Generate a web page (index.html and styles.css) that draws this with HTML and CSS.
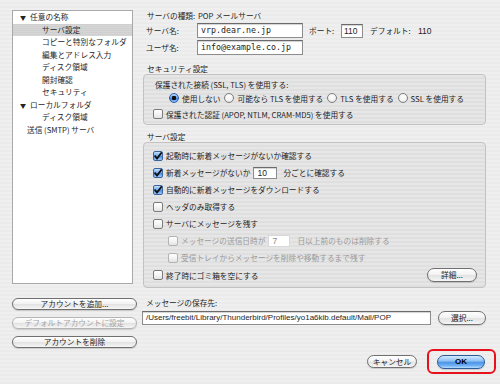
FILE: index.html
```html
<!DOCTYPE html>
<html lang="ja">
<head>
<meta charset="utf-8">
<link rel="stylesheet" href="styles.css">
</head>
<body>
<div class="window">
  <div class="left">
    <ul class="tree">
      <li class="row top"><span class="tri">▼</span>任意の名称</li>
      <li class="row sub sel">サーバ設定</li>
      <li class="row sub">コピーと特別なフォルダ</li>
      <li class="row sub">編集とアドレス入力</li>
      <li class="row sub">ディスク領域</li>
      <li class="row sub">開封確認</li>
      <li class="row sub">セキュリティ</li>
      <li class="row top"><span class="tri">▼</span>ローカルフォルダ</li>
      <li class="row sub">ディスク領域</li>
      <li class="row plain">送信 (SMTP) サーバ</li>
    </ul>
    <div class="acct-btns">
      <button class="pill wide">アカウントを追加...</button>
      <button class="pill wide disabled">デフォルトアカウントに設定</button>
      <button class="pill wide">アカウントを削除</button>
    </div>
  </div>

  <div class="right">
    <div class="line info"><span class="lbl">サーバの種類:</span><span>POP メールサーバ</span></div>
    <div class="line field">
      <span class="lbl">サーバ名:</span>
      <span class="input mono name">vrp.dear.ne.jp</span>
      <span class="port-lbl">ポート:</span>
      <span class="input port">110</span>
      <span class="def">デフォルト:</span><span class="def-val">110</span>
    </div>
    <div class="line field">
      <span class="lbl">ユーザ名:</span>
      <span class="input mono name">info@example.co.jp</span>
    </div>

    <div class="caption sec-cap">セキュリティ設定</div>
    <div class="group g1">
      <div class="g1-title">保護された接続 (SSL, TLS) を使用する:</div>
      <div class="radios">
        <span class="opt"><span class="radio on"></span>使用しない</span>
        <span class="opt"><span class="radio"></span>可能なら TLS を使用する</span>
        <span class="opt"><span class="radio"></span>TLS を使用する</span>
        <span class="opt"><span class="radio"></span>SSL を使用する</span>
      </div>
      <div class="opt"><span class="cb"></span>保護された認証 (APOP, NTLM, CRAM-MD5) を使用する</div>
    </div>

    <div class="caption srv-cap">サーバ設定</div>
    <div class="group g2">
      <div class="crow"><span class="cb on"></span>起動時に新着メッセージがないか確認する</div>
      <div class="crow"><span class="cb on"></span>新着メッセージがないか<span class="input mini ten">10</span>分ごとに確認する</div>
      <div class="crow"><span class="cb on"></span>自動的に新着メッセージをダウンロードする</div>
      <div class="crow"><span class="cb"></span>ヘッダのみ取得する</div>
      <div class="crow"><span class="cb"></span>サーバにメッセージを残す</div>
      <div class="crow indent dis"><span class="cb"></span>メッセージの送信日時が<span class="input mini seven">7</span>日以上前のものは削除する</div>
      <div class="crow indent dis"><span class="cb"></span>受信トレイからメッセージを削除や移動するまで残す</div>
      <div class="crow last"><span class="cbl"><span class="cb"></span>終了時にゴミ箱を空にする</span><button class="pill detail">詳細...</button></div>
    </div>

    <div class="caption store-cap">メッセージの保存先:</div>
    <div class="path-row">
      <span class="input path">/Users/freebit/Library/Thunderbird/Profiles/yo1a6kib.default/Mail/POP</span>
      <button class="pill choose">選択...</button>
    </div>

    <div class="footer">
      <button class="pill cancel">キャンセル</button>
      <span class="ok-frame"><button class="pill ok">OK</button></span>
    </div>
  </div>
</div>
</body>
</html>
```

FILE: styles.css
```css
* { box-sizing: border-box; }
html, body { margin: 0; padding: 0; }
body {
  width: 500px;
  height: 384px;
  overflow: hidden;
  font-family: "Noto Sans CJK JP", "Liberation Sans", sans-serif;
  font-size: 7.7px;
  color: #1e1e1e;
  background: repeating-linear-gradient(to bottom, #efefef 0 2px, #ebebeb 2px 4px);
}
.window {
  display: flex;
  padding: 10px 0 0 12px;
  height: 384px;
}
.left {
  width: 125px;
  display: flex;
  flex-direction: column;
}
.tree {
  list-style: none;
  margin: 0;
  padding: 0;
  width: 121px;
  height: 274px;
  background: #fff;
  border: 1px solid #a9a9a9;
}
.row {
  height: 12.5px;
  line-height: 12.5px;
  white-space: nowrap;
}
.row.top { padding-left: 7px; }
.row.sub { padding-left: 29px; }
.row.plain { padding-left: 14px; }
.row.sel {
  background: repeating-linear-gradient(to bottom, #cfcfcf 0 1px, #d6d6d6 1px 2px);
}
.tri {
  display: inline-block;
  width: 9px;
  font-size: 6px;
  color: #222;
  margin-right: 1px;
}
.acct-btns {
  display: flex;
  flex-direction: column;
  gap: 7px;
  margin-top: 14px;
}
.pill {
  font-family: inherit;
  font-size: 7.7px;
  color: #222;
  height: 12px;
  padding: 0;
  line-height: 10px;
  white-space: nowrap;
  text-align: center;
  border: 1px solid #6f6f6f;
  border-radius: 7px;
  background: linear-gradient(to bottom, #ffffff 0%, #f3f3f3 45%, #e3e3e3 55%, #f6f6f6 100%);
  box-shadow: 0 1px 1px rgba(0,0,0,0.15);
  cursor: default;
}
.pill.wide { width: 125px; }
.pill.disabled { color: #a4a4a4; border-color: #b4b4b4; }

.right {
  width: 343px;
  margin-left: 6px;
  display: flex;
  flex-direction: column;
}
.line {
  display: flex;
  align-items: center;
  white-space: nowrap;
}
.info { height: 10px; padding-left: 4px; }
.lbl { width: 51px; flex: none; }
.field { margin-top: 3px; padding-left: 3px; }
.field + .field { margin-top: 2px; }
.input {
  display: inline-block;
  background: #fff;
  border: 1px solid #8d8d8d;
  border-top-color: #6a6a6a;
  box-shadow: inset 0 1px 1px rgba(0,0,0,0.18);
  white-space: nowrap;
  overflow: hidden;
}
.mono {
  font-family: "DejaVu Sans Mono", "Liberation Mono", monospace;
  font-size: 8.3px;
}
.name {
  width: 106px;
  height: 15px;
  line-height: 13px;
  padding-left: 3px;
}
.port-lbl { margin-left: 6px; width: 32px; }
.port {
  width: 22px;
  height: 14px;
  line-height: 12px;
  padding-left: 2px;
  font-family: "Liberation Sans", sans-serif;
  font-size: 8.5px;
}
.def { margin-left: 7px; width: 48px; }
.def-val { font-family: "Liberation Sans", sans-serif; font-size: 8.5px; }

.caption { height: 10px; line-height: 10px; padding-left: 4px; }
.sec-cap { margin-top: 9px; }
.srv-cap { margin-top: 7px; }
.store-cap { margin-top: 10px; padding-left: 3px; }

.group {
  border: 1px solid #c2c2c2;
  border-radius: 4px;
  background: repeating-linear-gradient(to bottom, #e6e6e6 0 2px, #dfdfdf 2px 4px);
}
.g1 {
  height: 51px;
  padding: 5px 0 0 9px;
}
.g1-title { height: 10px; line-height: 10px; padding-left: 2px; }
.radios {
  display: flex;
  gap: 4px;
  margin-top: 2px;
  padding-left: 16px;
  height: 12px;
  align-items: center;
}
.opt {
  display: flex;
  align-items: center;
  height: 12px;
  white-space: nowrap;
}
.g1 > .opt { margin-top: 4px; }
.radio {
  width: 10px;
  height: 10px;
  border-radius: 50%;
  border: 1px solid #7d7d7d;
  background: radial-gradient(circle at 50% 35%, #ffffff 0%, #f0f0f0 60%, #d8d8d8 100%);
  margin-right: 3px;
  flex: none;
}
.radio.on {
  border-color: #2f5ea8;
  background: radial-gradient(circle at 50% 50%, #111 0 2px, transparent 2.5px),
              linear-gradient(to bottom, #bcdcff 0%, #5c9de8 50%, #3f83db 55%, #8fc4ff 100%);
}
.cb {
  width: 10px;
  height: 10px;
  border: 1px solid #7b7b7b;
  border-radius: 2px;
  background: linear-gradient(to bottom, #ffffff 0%, #f4f4f4 50%, #e2e2e2 100%);
  margin-right: 3px;
  flex: none;
  display: inline-block;
}
.cb.on {
  border-color: #3c64a0;
  background:
    url("data:image/svg+xml;utf8,<svg xmlns='http://www.w3.org/2000/svg' width='10' height='10' viewBox='0 0 10 10'><path d='M1.6 4.6 L4 7.6 L9.6 0.2' fill='none' stroke='%23111' stroke-width='1.8'/></svg>") center/10px 10px no-repeat,
    linear-gradient(to bottom, #c4e0ff 0%, #6aa6ea 50%, #4a8ce0 55%, #9acbff 100%);
}
.g2 {
  height: 146px;
  padding: 4px 8px 0 9px;
}
.crow {
  height: 17px;
  display: flex;
  align-items: center;
  white-space: nowrap;
}
.crow.indent { padding-left: 15px; }
.crow.dis { color: #9a9a9a; }
.crow.dis .cb { border-color: #b3b3b3; }
.mini {
  height: 12px;
  line-height: 10px;
  font-family: "Liberation Sans", sans-serif;
  font-size: 8.5px;
  padding-left: 3px;
}
.ten { width: 24px; margin: 0 6px 0 3px; }
.seven { width: 22px; margin: 0 7px 0 3px; border-color: #d8d8d8; box-shadow: none; color: #888; }
.crow.last { justify-content: space-between; height: 18px; }
.cbl { display: flex; align-items: center; }
.detail { width: 50px; height: 14px; }

.path-row {
  display: flex;
  align-items: center;
  margin-top: 3px;
  gap: 7px;
  margin-left: -1px;
}
.path {
  width: 289px;
  height: 14px;
  line-height: 12px;
  padding-left: 3px;
  font-family: "Liberation Sans", sans-serif;
  font-size: 8px;
}
.choose { width: 48px; height: 14px; }

.footer {
  display: flex;
  justify-content: flex-end;
  align-items: center;
  gap: 10px;
  margin-top: 24px;
  margin-right: -10px;
}
.cancel { width: 50px; height: 13px; }
.ok-frame {
  display: flex;
  border: 2px solid #e8101a;
  border-radius: 6px;
  padding: 4px 9px 3px 8px;
}
.ok {
  width: 48px;
  height: 14px;
  font-weight: bold;
  font-family: "Liberation Sans", sans-serif;
  font-size: 8px;
  color: #000;
  border-color: #2e5a99;
  background: linear-gradient(to bottom, #d4ebff 0%, #8fc2f5 40%, #4f95e5 55%, #6fb1f6 80%, #b6dcff 100%);
}
```
